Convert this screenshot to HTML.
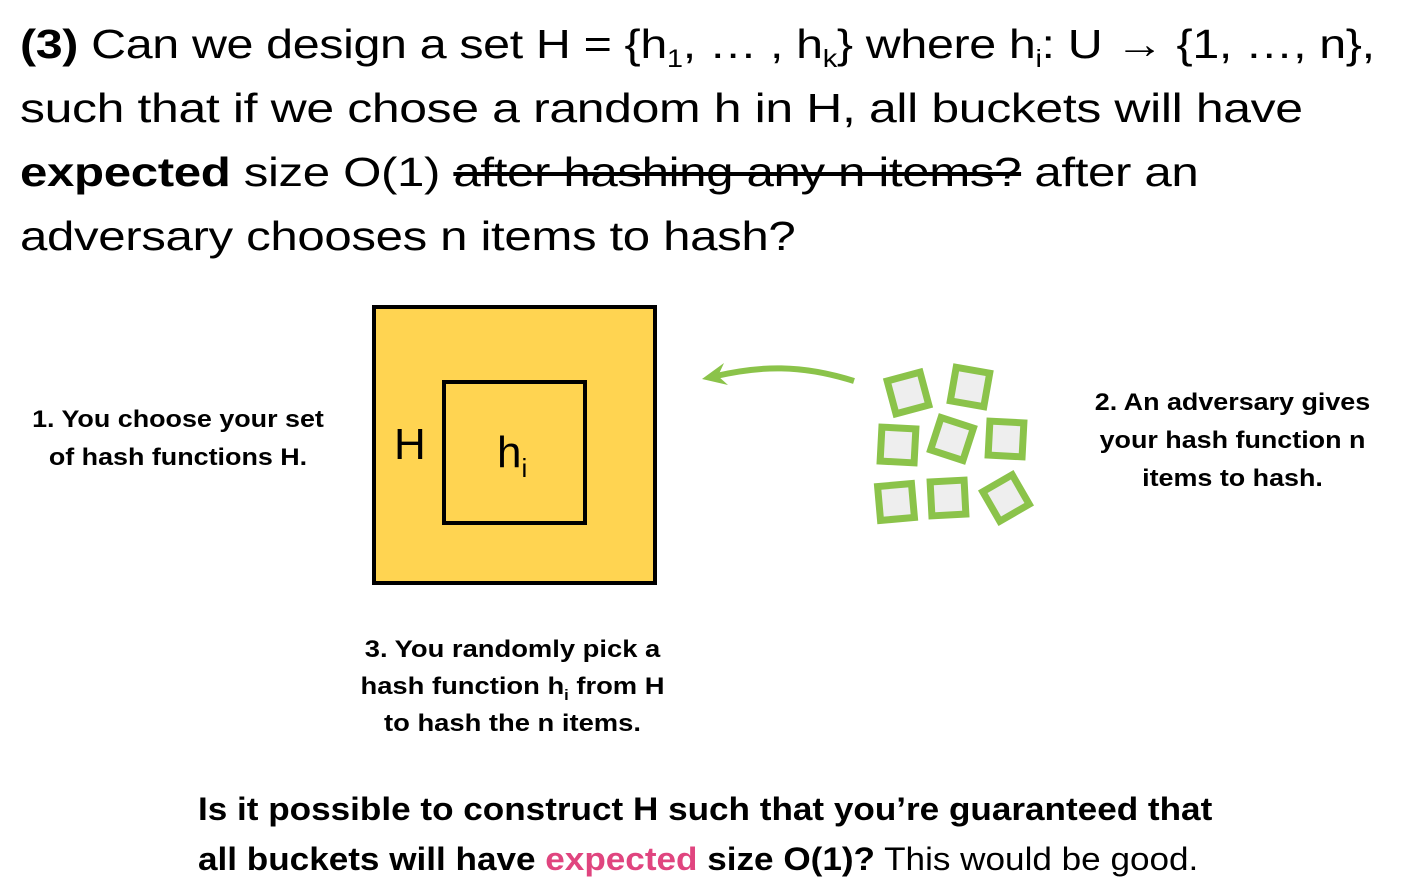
<!DOCTYPE html>
<html><head><style>
body{margin:0;width:1410px;height:888px;background:#fff;font-family:"Liberation Sans",sans-serif;color:#000;position:relative;overflow:hidden}
.l{position:absolute;left:20px;font-size:41px;line-height:64px;white-space:nowrap;letter-spacing:-0.3px;transform-origin:0 50%}
.s{position:absolute;font-weight:bold;font-size:24px;line-height:38px;text-align:center;white-space:nowrap;transform-origin:50% 50%}
sub{font-size:0.6em;line-height:0}
</style></head><body>
<div class="l" style="top:12px;transform:scaleX(1.18)"><b>(3)</b> Can we design a set H = {h<sub>1</sub>, … , h<sub>k</sub>} where h<sub>i</sub>: U → {1, …, n},</div>
<div class="l" style="top:76px;transform:scaleX(1.218)">such that if we chose a random h in H, all buckets will have</div>
<div class="l" style="top:140px;transform:scaleX(1.2)"><b>expected</b> size O(1) <s>after hashing any n items?</s> after an</div>
<div class="l" style="top:204px;transform:scaleX(1.2)">adversary chooses n items to hash?</div>
<div style="position:absolute;left:372px;top:305px;width:277px;height:272px;background:#ffd451;border:4px solid #000"></div>
<div style="position:absolute;left:442px;top:380px;width:137px;height:137px;border:4px solid #000"></div>
<div style="position:absolute;left:394px;top:420px;font-size:44px">H</div>
<div style="position:absolute;left:497px;top:428px;font-size:44px">h<sub style="font-size:26px">i</sub></div>
<div class="s" style="left:28px;top:401px;width:300px;transform:scaleX(1.12)">1. You choose your set<br>of hash functions H.</div>
<div class="s" style="left:1085px;top:384px;width:295px;transform:scaleX(1.12)">2. An adversary gives<br>your hash function n<br>items to hash.</div>
<div class="s" style="left:355px;top:631px;width:315px;line-height:37px;transform:scaleX(1.14)">3. You randomly pick a<br>hash function h<sub>i</sub> from H<br>to hash the n items.</div>
<div style="position:absolute;left:198px;top:784px;font-size:32px;line-height:50px;white-space:nowrap;transform:scaleX(1.097);transform-origin:0 50%"><b>Is it possible to construct H such that you’re guaranteed that<br>all buckets will have <span style="color:#e0457f">expected</span> size O(1)?</b> This would be good.</div>
<svg style="position:absolute;left:0;top:0" width="1410" height="888">
<path d="M854 381 C800 364 760 366 716 376" stroke="#8bc34a" stroke-width="6" fill="none"/>
<path d="M702 379 L724 363 L718 376 L728 385 Z" fill="#8bc34a"/>
<g fill="#eee" stroke="#8bc34a" stroke-width="7">
<rect x="-17" y="-17" width="34" height="34" transform="translate(908,393) rotate(-15)"/>
<rect x="-17" y="-17" width="34" height="34" transform="translate(970,387) rotate(10)"/>
<rect x="-17" y="-17" width="34" height="34" transform="translate(898,445) rotate(3)"/>
<rect x="-17" y="-17" width="34" height="34" transform="translate(952,439) rotate(18)"/>
<rect x="-17" y="-17" width="34" height="34" transform="translate(1006,439) rotate(3)"/>
<rect x="-17" y="-17" width="34" height="34" transform="translate(896,502) rotate(-5)"/>
<rect x="-17" y="-17" width="34" height="34" transform="translate(948,498) rotate(-3)"/>
<rect x="-17" y="-17" width="34" height="34" transform="translate(1006,498) rotate(-30)"/>
</g>
</svg>
</body></html>
